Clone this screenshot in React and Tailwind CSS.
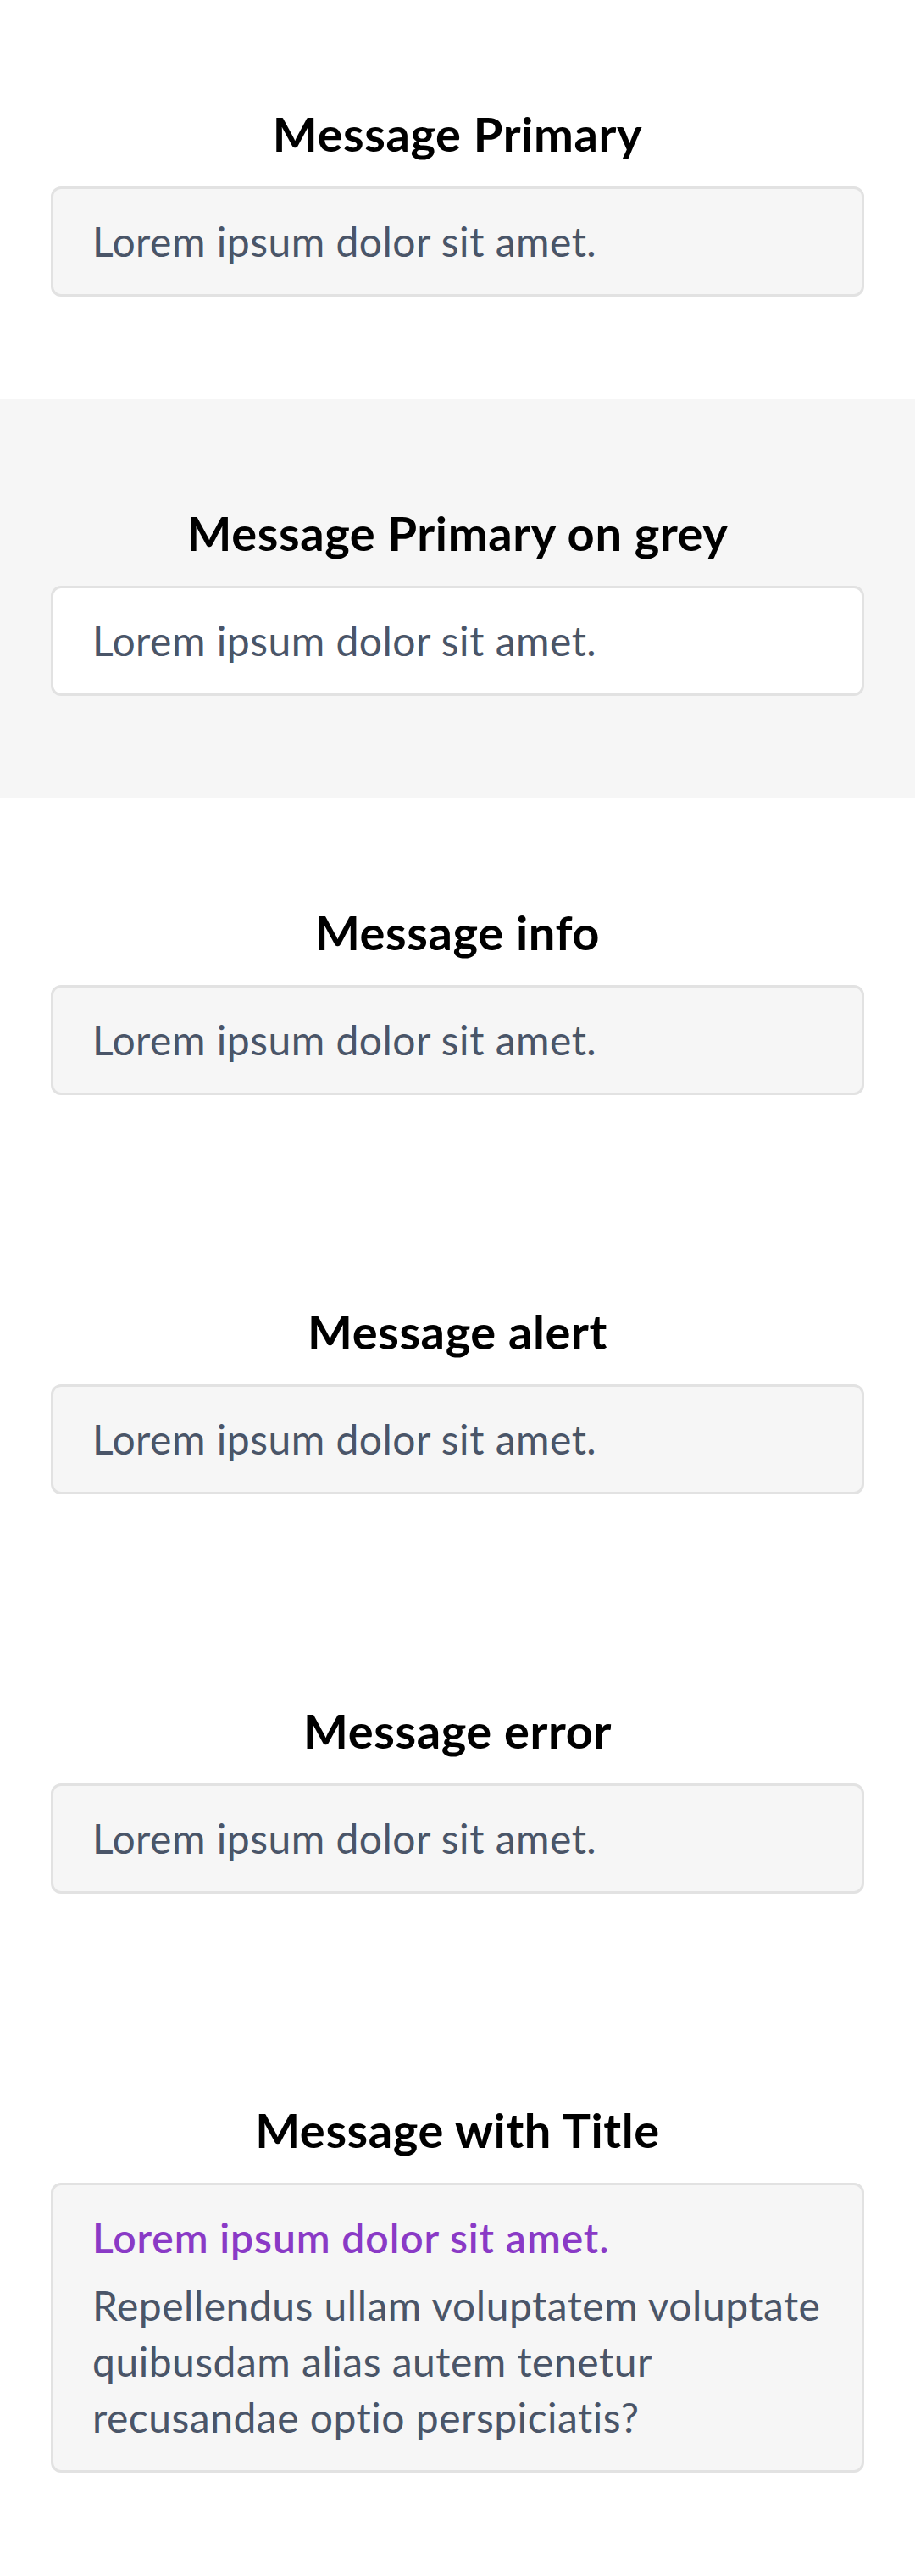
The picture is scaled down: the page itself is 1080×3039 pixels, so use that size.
import React from 'react';

const sections = [
    { title: 'Message Primary', grey: false },
    { title: 'Message Primary on grey', grey: true },
    { title: 'Message info', grey: false },
    { title: 'Message alert', grey: false },
    { title: 'Message error', grey: false },
];

const Message = ({ onGrey, title, children }) => (
    <div
        className={`border-[3px] border-[#e2e2e2] rounded-[12px] pl-[46px] pr-[40px] py-[29px] ${onGrey ? 'bg-white' : 'bg-[#f6f6f6]'}`}
    >
        {title && (
            <p className="text-[48px] leading-[66px] font-semibold tracking-[0.9px] text-[#8a3ac6] mb-[14px]">{title}</p>
        )}
        <p className="text-[48px] leading-[66px] tracking-[0.5px] text-[#4a5568]">{children}</p>
    </div>
);

const Section = ({ heading, grey, children }) => (
    <section className={`px-[60px] pt-[120px] pb-[121px] ${grey ? 'bg-[#f6f6f6]' : 'bg-white'}`}>
        <h2 className="text-center text-[56px] leading-[75px] font-bold tracking-[0.6px] text-black mb-[25px]">{heading}</h2>
        {children}
    </section>
);

const App = () => {
    return (
        <div className="w-[1080px] bg-white font-['Lato',sans-serif]">
            {sections.map((s) => (
                <Section key={s.title} heading={s.title} grey={s.grey}>
                    <Message onGrey={s.grey}>Lorem ipsum dolor sit amet.</Message>
                </Section>
            ))}
            <Section heading="Message with Title">
                <Message title="Lorem ipsum dolor sit amet.">
                    Repellendus ullam voluptatem voluptate quibusdam alias autem tenetur recusandae optio perspiciatis?
                </Message>
            </Section>
        </div>
    );
};

export default App;
